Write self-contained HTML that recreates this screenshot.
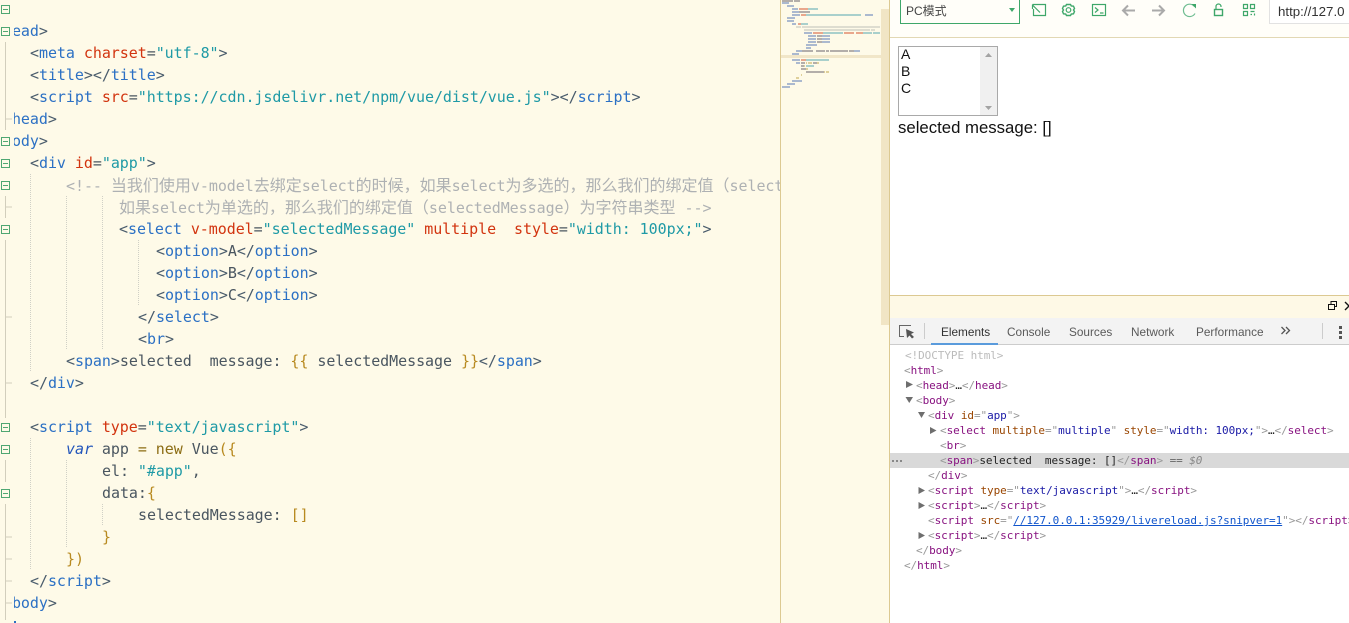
<!DOCTYPE html>
<html><head><meta charset="utf-8"><style>
html,body{margin:0;padding:0;width:1349px;height:623px;overflow:hidden;background:#fff}
#ed{position:absolute;left:0;top:0;width:781px;height:623px;background:#fefae8;overflow:hidden}
#clip{position:absolute;left:13px;top:0;width:767px;height:623px;overflow:hidden;clip-path:inset(0 0 0 1px)}
.l{position:absolute;white-space:pre;font:15px/22px "DejaVu Sans Mono","Noto Sans CJK SC",monospace;color:#4a5660;letter-spacing:-.055px}
.k{color:#4a5c6c}.t{color:#2b70c4}.a{color:#d2340f}.s{color:#1f9aa6}.c{color:#aeb1b3}.o{color:#b88a20}.v{color:#2255bb;font-style:italic}.n{color:#8c6d14}
.cj{font-family:"Noto Sans CJK SC",sans-serif;font-size:16px;letter-spacing:0;line-height:20px}
#dt .l{font:11px/15px "DejaVu Sans Mono",monospace;color:#222;letter-spacing:-.065px}
#dt .g{color:#999}#dt .p{color:#881280}#dt .b{color:#994500}#dt .q{color:#1a1aa6}#dt .u{color:#1155cc;text-decoration:underline}
.tab{position:absolute;top:325px;font:11.8px/14px "Liberation Sans",sans-serif;color:#5a5a5a}
.opt{position:absolute;left:901px;font:14px/17px "Liberation Sans",sans-serif;color:#111}
svg{position:absolute;display:block}
</style></head><body>
<div id="ed">
<svg width="30" height="623" style="left:0;top:0" fill="none">
<g stroke="#d2cebc"><path d="M5.5 42V130M5.5 196V218M5.5 240V418M5.5 460V482M5.5 504V620M6 119H12M6 207H12M6 317H12M6 383H12M6 537H12M6 559H12M6 581H12M6 603H12"/></g>
<g stroke="#4fa772" fill="#fefae8">
<rect x="1.5" y="5.5" width="8" height="8"/><rect x="1.5" y="27.5" width="8" height="8"/><rect x="1.5" y="137.5" width="8" height="8"/><rect x="1.5" y="159.5" width="8" height="8"/><rect x="1.5" y="181.5" width="8" height="8"/><rect x="1.5" y="225.5" width="8" height="8"/><rect x="1.5" y="423.5" width="8" height="8"/><rect x="1.5" y="445.5" width="8" height="8"/><rect x="1.5" y="489.5" width="8" height="8"/>
<path d="M3 9.5H8M3 31.5H8M3 141.5H8M3 163.5H8M3 185.5H8M3 229.5H8M3 427.5H8M3 449.5H8M3 493.5H8"/></g>
</svg>
<svg width="150" height="623" style="left:0;top:0" fill="none" stroke="#d0d0c6" stroke-dasharray="1 1">
<path d="M30.5 174V372M66.5 196V350M102.5 196V350M138.5 240V306M30.5 438V570M66.5 460V548M102.5 504V526"/>
</svg>
<div style="position:absolute;left:14px;top:621px;width:2px;height:2px;background:#2b70c4"></div>
<div id="clip">
<div class="l" style="left:-19px;top:20px"><span class="k">&lt;</span><span class="t">head</span><span class="k">&gt;</span></div>
<div class="l" style="left:17px;top:42px"><span class="k">&lt;</span><span class="t">meta</span> <span class="a">charset</span>=<span class="s">"utf-8"</span><span class="k">&gt;</span></div>
<div class="l" style="left:17px;top:64px"><span class="k">&lt;</span><span class="t">title</span><span class="k">&gt;&lt;/</span><span class="t">title</span><span class="k">&gt;</span></div>
<div class="l" style="left:17px;top:86px"><span class="k">&lt;</span><span class="t">script</span> <span class="a">src</span>=<span class="s">"https://cdn.jsdelivr.net/npm/vue/dist/vue.js"</span><span class="k">&gt;&lt;/</span><span class="t">script</span><span class="k">&gt;</span></div>
<div class="l" style="left:-19px;top:108px"><span class="k">&lt;/</span><span class="t">head</span><span class="k">&gt;</span></div>
<div class="l" style="left:-19px;top:130px"><span class="k">&lt;</span><span class="t">body</span><span class="k">&gt;</span></div>
<div class="l" style="left:17px;top:152px"><span class="k">&lt;</span><span class="t">div</span> <span class="a">id</span>=<span class="s">"app"</span><span class="k">&gt;</span></div>
<div class="l c" style="left:53px;top:174px">&lt;!-- <span class="cj">当我们使用</span>v-model<span class="cj">去绑定</span>select<span class="cj">的时候，如果</span>select<span class="cj">为多选的，那么我们的绑定值（</span>selectedMessage<span class="cj">）为数组类型</span></div>
<div class="l c" style="left:106px;top:196px"><span class="cj">如果</span>select<span class="cj">为单选的，那么我们的绑定值（</span>selectedMessage<span class="cj">）为字符串类型</span> --&gt;</div>
<div class="l" style="left:106px;top:218px"><span class="k">&lt;</span><span class="t">select</span> <span class="a">v-model</span>=<span class="s">"selectedMessage"</span> <span class="a">multiple</span>  <span class="a">style</span>=<span class="s">"width: 100px;"</span><span class="k">&gt;</span></div>
<div class="l" style="left:143px;top:240px"><span class="k">&lt;</span><span class="t">option</span><span class="k">&gt;</span>A<span class="k">&lt;/</span><span class="t">option</span><span class="k">&gt;</span></div>
<div class="l" style="left:143px;top:262px"><span class="k">&lt;</span><span class="t">option</span><span class="k">&gt;</span>B<span class="k">&lt;/</span><span class="t">option</span><span class="k">&gt;</span></div>
<div class="l" style="left:143px;top:284px"><span class="k">&lt;</span><span class="t">option</span><span class="k">&gt;</span>C<span class="k">&lt;/</span><span class="t">option</span><span class="k">&gt;</span></div>
<div class="l" style="left:125px;top:306px"><span class="k">&lt;/</span><span class="t">select</span><span class="k">&gt;</span></div>
<div class="l" style="left:125px;top:328px"><span class="k">&lt;</span><span class="t">br</span><span class="k">&gt;</span></div>
<div class="l" style="left:53px;top:350px"><span class="k">&lt;</span><span class="t">span</span><span class="k">&gt;</span>selected  message: <span class="o">{{</span> selectedMessage <span class="o">}}</span><span class="k">&lt;/</span><span class="t">span</span><span class="k">&gt;</span></div>
<div class="l" style="left:17px;top:372px"><span class="k">&lt;/</span><span class="t">div</span><span class="k">&gt;</span></div>
<div class="l" style="left:17px;top:416px"><span class="k">&lt;</span><span class="t">script</span> <span class="a">type</span>=<span class="s">"text/javascript"</span><span class="k">&gt;</span></div>
<div class="l" style="left:53px;top:438px"><span class="v">var</span> app <span class="n">=</span> <span class="n">new</span> Vue<span class="o">({</span></div>
<div class="l" style="left:89px;top:460px">el: <span class="s">"#app"</span>,</div>
<div class="l" style="left:89px;top:482px">data:<span class="o">{</span></div>
<div class="l" style="left:125px;top:504px">selectedMessage: <span class="o">[]</span></div>
<div class="l" style="left:89px;top:526px"><span class="o">}</span></div>
<div class="l" style="left:53px;top:548px"><span class="o">})</span></div>
<div class="l" style="left:17px;top:570px"><span class="k">&lt;/</span><span class="t">script</span><span class="k">&gt;</span></div>
<div class="l" style="left:-19px;top:592px"><span class="k">&lt;/</span><span class="t">body</span><span class="k">&gt;</span></div>
</div>
</div>

<!-- minimap -->
<div style="position:absolute;left:780px;top:0;width:110px;height:623px;background:#fefae8"></div>
<div style="position:absolute;left:780px;top:0;width:1px;height:623px;background:#dcc992"></div>
<div style="position:absolute;left:889px;top:0;width:1px;height:623px;background:#dcc992"></div>
<div style="position:absolute;left:781px;top:55px;width:108px;height:3px;background:#f1e6c8"></div>
<div style="position:absolute;left:881px;top:9px;width:8px;height:316px;background:#f1e5c5"></div>
<svg width="110" height="90" style="left:770px;top:0" id="mm">
<g fill="#abb9cf"><rect x="12" y="2" width="7" height="2"/><rect x="17" y="5" width="7" height="2"/><rect x="22" y="8" width="6" height="2"/><rect x="22" y="11" width="7" height="2"/><rect x="22" y="14" width="8" height="2"/><rect x="95" y="14" width="8" height="2"/><rect x="17" y="17" width="8" height="2"/><rect x="17" y="20" width="7" height="2"/><rect x="22" y="23" width="4" height="2"/><rect x="34" y="32" width="8" height="2"/><rect x="38" y="35" width="8" height="2"/><rect x="52" y="35" width="8" height="2"/><rect x="38" y="38" width="8" height="2"/><rect x="52" y="38" width="8" height="2"/><rect x="38" y="41" width="8" height="2"/><rect x="52" y="41" width="8" height="2"/><rect x="36" y="44" width="11" height="2"/><rect x="36" y="47" width="5" height="2"/><rect x="26" y="50" width="6" height="2"/><rect x="84" y="50" width="6" height="2"/><rect x="22" y="53" width="7" height="2"/><rect x="22" y="59" width="8" height="2"/><rect x="26" y="62" width="4" height="2"/><rect x="22" y="80" width="10" height="2"/><rect x="17" y="83" width="8" height="2"/><rect x="12" y="86" width="8" height="2"/></g>
<g fill="#e9a78c"><rect x="29" y="8" width="9" height="2"/><rect x="31" y="14" width="5" height="2"/><rect x="28" y="23" width="3" height="2"/><rect x="43" y="32" width="10" height="2"/><rect x="74" y="32" width="10" height="2"/><rect x="86" y="32" width="7" height="2"/><rect x="31" y="59" width="5" height="2"/></g>
<g fill="#a9d0cc"><rect x="38" y="8" width="10" height="2"/><rect x="36" y="14" width="55" height="2"/><rect x="31" y="23" width="7" height="2"/><rect x="53" y="32" width="20" height="2"/><rect x="93" y="32" width="9" height="2"/><rect x="103" y="32" width="7" height="2"/><rect x="36" y="59" width="23" height="2"/><rect x="36" y="65" width="8" height="2"/></g>
<g fill="#b3aeaa"><rect x="12" y="0" width="11" height="2"/><rect x="24" y="0" width="6" height="2"/><rect x="29" y="11" width="11" height="2"/><rect x="47" y="35" width="5" height="2"/><rect x="47" y="38" width="5" height="2"/><rect x="47" y="41" width="5" height="2"/><rect x="32" y="50" width="11" height="2"/><rect x="46" y="50" width="9" height="2"/><rect x="56" y="50" width="3" height="2"/><rect x="60" y="50" width="18" height="2"/><rect x="79" y="50" width="5" height="2"/><rect x="31" y="62" width="4" height="2"/><rect x="43" y="62" width="4" height="2"/><rect x="31" y="65" width="3" height="2"/><rect x="31" y="68" width="5" height="2"/><rect x="36" y="71" width="18" height="2"/></g>
<g fill="#deddd0"><rect x="26" y="26" width="5" height="2"/><rect x="32" y="26" width="78" height="2"/><rect x="34" y="29" width="66" height="2"/><rect x="101" y="29" width="4" height="2"/></g>
<g fill="#dfd09a"><rect x="36" y="62" width="1" height="2"/><rect x="38" y="62" width="4" height="2"/><rect x="47" y="62" width="2" height="2"/><rect x="34" y="65" width="1" height="2"/><rect x="36" y="68" width="2" height="2"/><rect x="54" y="71" width="1" height="2"/><rect x="56" y="71" width="3" height="2"/><rect x="31" y="74" width="1" height="2"/><rect x="26" y="77" width="3" height="2"/></g>
</svg>

<!-- toolbar -->
<div style="position:absolute;left:890px;top:0;width:459px;height:37px;background:#fffef9;border-bottom:1px solid #e2d8b4"></div>
<div style="position:absolute;left:900px;top:-2px;width:118px;height:24px;border:1px solid #3ea76a;box-sizing:content-box"></div>
<div style="position:absolute;left:906px;top:3px;font:12px/16px 'Liberation Sans','Noto Sans CJK SC',sans-serif;color:#444">PC模式</div>
<svg width="8" height="6" style="left:1008px;top:7px"><path d="M1 1H7L4 5Z" fill="#3ea76a"/></svg>
<svg width="240" height="24" style="left:1025px;top:0" fill="none" stroke="#3ea76a" stroke-width="1.2">
<path d="M11 4.500H20.500V15.500H8.500V9M7.500 5L15 12.500M7.500 4.500V9M7.500 4.500H12"/>
<circle cx="43.500" cy="10" r="2.300"/><path d="M41.500 4.500H45.500L46.300 6L48.500 6.200L49.500 8.500L48.500 10L49.500 11.500L48.500 13.800L46.300 14L45.500 15.500H41.500L40.700 14L38.500 13.800L37.500 11.500L38.500 10L37.500 8.500L38.500 6.200L40.700 6Z" stroke-width="1.400"/>
<rect x="67.500" y="4.500" width="13" height="11"/><path d="M70 7.500L73 10L70 12.500M75 13H78.500"/>
<path d="M110 10.500H98M103 5.500L98 10.500L103 15.500" stroke="#aaa" stroke-width="2"/>
<path d="M127 10.500H139M134 5.500L139 10.500L134 15.500" stroke="#aaa" stroke-width="2"/>
<path d="M169.500 6.500A6.200 6.200 0 1 0 170 13.500" stroke="#6fbd92"/><path d="M166.500 4H171V8.500Z" fill="#3ea76a" stroke="none"/>
<rect x="189.500" y="9.500" width="8" height="6" stroke-width="1.400"/><path d="M191 9V6.500A2.500 2.500 0 0 1 196 6.500V7"/>
<path d="M218.500 4.500H222.500V8.500H218.500ZM225.500 4.500H229.500V8.500H225.500ZM218.500 11.500H222.500V15.500H218.500ZM225.500 11.500H229.500M225.500 14.500H227M229.500 13.500V15.500"/>
</svg>
<div style="position:absolute;left:1269px;top:-2px;width:90px;height:24px;border:1px solid #e2e2e2;background:#fff;font:13.3px/26px 'Liberation Sans',sans-serif;color:#333;padding-left:8px;overflow:hidden;white-space:nowrap">http://127.0</div>

<!-- page -->
<div style="position:absolute;left:898px;top:46px;width:98px;height:68px;border:1px solid #a9a9a9;background:#fff"></div>
<div style="position:absolute;left:980px;top:47px;width:17px;height:68px;background:#f0f0f0"></div>
<svg width="17" height="68" style="left:980px;top:47px"><path d="M5 10L8.500 6L12 10ZM5 59L8.500 63L12 59Z" fill="#a3a3a3"/></svg>
<div class="opt" style="top:46px">A</div><div class="opt" style="top:63px">B</div><div class="opt" style="top:80px">C</div>
<div style="position:absolute;left:898px;top:119px;font:16.75px/18px 'Liberation Sans',sans-serif;color:#111;white-space:nowrap">selected message: []</div>

<!-- devtools -->
<div style="position:absolute;left:890px;top:295px;width:459px;height:1px;background:#dcc992"></div>
<div style="position:absolute;left:890px;top:296px;width:459px;height:22px;background:#fef9e6"></div>
<svg width="30" height="14" style="left:1325px;top:300px" fill="none" stroke="#111"><rect x="3.500" y="4.500" width="6" height="5"/><path d="M6 4V1.500H11.500V6.500H10"/><path d="M20 2L24 6L20 10" stroke-width="1.400"/></svg>
<div style="position:absolute;left:890px;top:318px;width:459px;height:27px;background:#f3f3f3;border-bottom:1px solid #ccc;box-sizing:border-box"></div>
<svg width="20" height="18" style="left:898px;top:323px" fill="none"><path d="M13 2.500H1.500V13.500H6" stroke="#666"/><path d="M8 6L16 9.500L13 11L16 14L14 15.500L11.500 12.500L9 15Z" fill="#555"/></svg>
<div style="position:absolute;left:924px;top:323px;width:1px;height:16px;background:#ccc"></div>
<div class="tab" style="left:941px;color:#333">Elements</div><div class="tab" style="left:1007px">Console</div><div class="tab" style="left:1069px">Sources</div><div class="tab" style="left:1131px">Network</div><div class="tab" style="left:1196px">Performance</div>
<div style="position:absolute;left:931px;top:343px;width:67px;height:2px;background:#5a9bdc"></div>
<svg width="12" height="10" style="left:1280px;top:326px" fill="none" stroke="#555" stroke-width="1.300"><path d="M1.500 1L5 4.500L1.500 8M6 1L9.500 4.500L6 8"/></svg>
<div style="position:absolute;left:1322px;top:323px;width:1px;height:16px;background:#ccc"></div>
<svg width="6" height="16" style="left:1339px;top:324px" fill="#555"><rect x="0" y="2" width="3" height="3"/><rect x="0" y="7" width="3" height="3"/><rect x="0" y="12" width="3" height="3"/></svg>
<div style="position:absolute;left:890px;top:453px;width:459px;height:15px;background:#d9d9d9"></div>
<svg width="12" height="4" style="left:892px;top:459px" fill="#888"><rect width="2" height="2" y="1"/><rect x="4" width="2" height="2" y="1"/><rect x="8" width="2" height="2" y="1"/></svg>
<svg width="50" height="220" style="left:900px;top:375px" fill="#6e6e6e"><path d="M6 6V13L13 9.500Z"/><path d="M5.500 22H13L9.250 28Z"/><path d="M18 37H25L21.500 43Z"/><path d="M30 52V59L36.500 55.500Z"/><path d="M18.500 112V119L25 115.500Z"/><path d="M18.500 127V134L25 130.500Z"/><path d="M18.500 157V164L25 160.500Z"/></svg>
<div id="dt">
<div class="l g" style="left:905px;top:348px;color:#bbb">&lt;!DOCTYPE html&gt;</div>
<div class="l" style="left:904px;top:363px"><span class="g">&lt;</span><span class="p">html</span><span class="g">&gt;</span></div>
<div class="l" style="left:916px;top:378px"><span class="g">&lt;</span><span class="p">head</span><span class="g">&gt;</span>…<span class="g">&lt;/</span><span class="p">head</span><span class="g">&gt;</span></div>
<div class="l" style="left:916px;top:393px"><span class="g">&lt;</span><span class="p">body</span><span class="g">&gt;</span></div>
<div class="l" style="left:928px;top:408px"><span class="g">&lt;</span><span class="p">div</span> <span class="b">id</span><span class="g">="</span><span class="q">app</span><span class="g">"&gt;</span></div>
<div class="l" style="left:940px;top:423px"><span class="g">&lt;</span><span class="p">select</span> <span class="b">multiple</span><span class="g">="</span><span class="q">multiple</span><span class="g">"</span> <span class="b">style</span><span class="g">="</span><span class="q">width: 100px;</span><span class="g">"&gt;</span>…<span class="g">&lt;/</span><span class="p">select</span><span class="g">&gt;</span></div>
<div class="l" style="left:940px;top:438px"><span class="g">&lt;</span><span class="p">br</span><span class="g">&gt;</span></div>
<div class="l" style="left:940px;top:453px"><span class="g">&lt;</span><span class="p">span</span><span class="g">&gt;</span>selected  message: []<span class="g">&lt;/</span><span class="p">span</span><span class="g">&gt;</span> <span style="color:#666">==</span> <span style="color:#888;font-style:italic">$0</span></div>
<div class="l" style="left:928px;top:468px"><span class="g">&lt;/</span><span class="p">div</span><span class="g">&gt;</span></div>
<div class="l" style="left:928px;top:483px"><span class="g">&lt;</span><span class="p">script</span> <span class="b">type</span><span class="g">="</span><span class="q">text/javascript</span><span class="g">"&gt;</span>…<span class="g">&lt;/</span><span class="p">script</span><span class="g">&gt;</span></div>
<div class="l" style="left:928px;top:498px"><span class="g">&lt;</span><span class="p">script</span><span class="g">&gt;</span>…<span class="g">&lt;/</span><span class="p">script</span><span class="g">&gt;</span></div>
<div class="l" style="left:928px;top:513px"><span class="g">&lt;</span><span class="p">script</span> <span class="b">src</span><span class="g">="</span><span class="u">//127.0.0.1:35929/livereload.js?snipver=1</span><span class="g">"&gt;&lt;/</span><span class="p">script</span><span class="g">&gt;</span></div>
<div class="l" style="left:928px;top:528px"><span class="g">&lt;</span><span class="p">script</span><span class="g">&gt;</span>…<span class="g">&lt;/</span><span class="p">script</span><span class="g">&gt;</span></div>
<div class="l" style="left:916px;top:543px"><span class="g">&lt;/</span><span class="p">body</span><span class="g">&gt;</span></div>
<div class="l" style="left:904px;top:558px"><span class="g">&lt;/</span><span class="p">html</span><span class="g">&gt;</span></div>
</div>
</body></html>
